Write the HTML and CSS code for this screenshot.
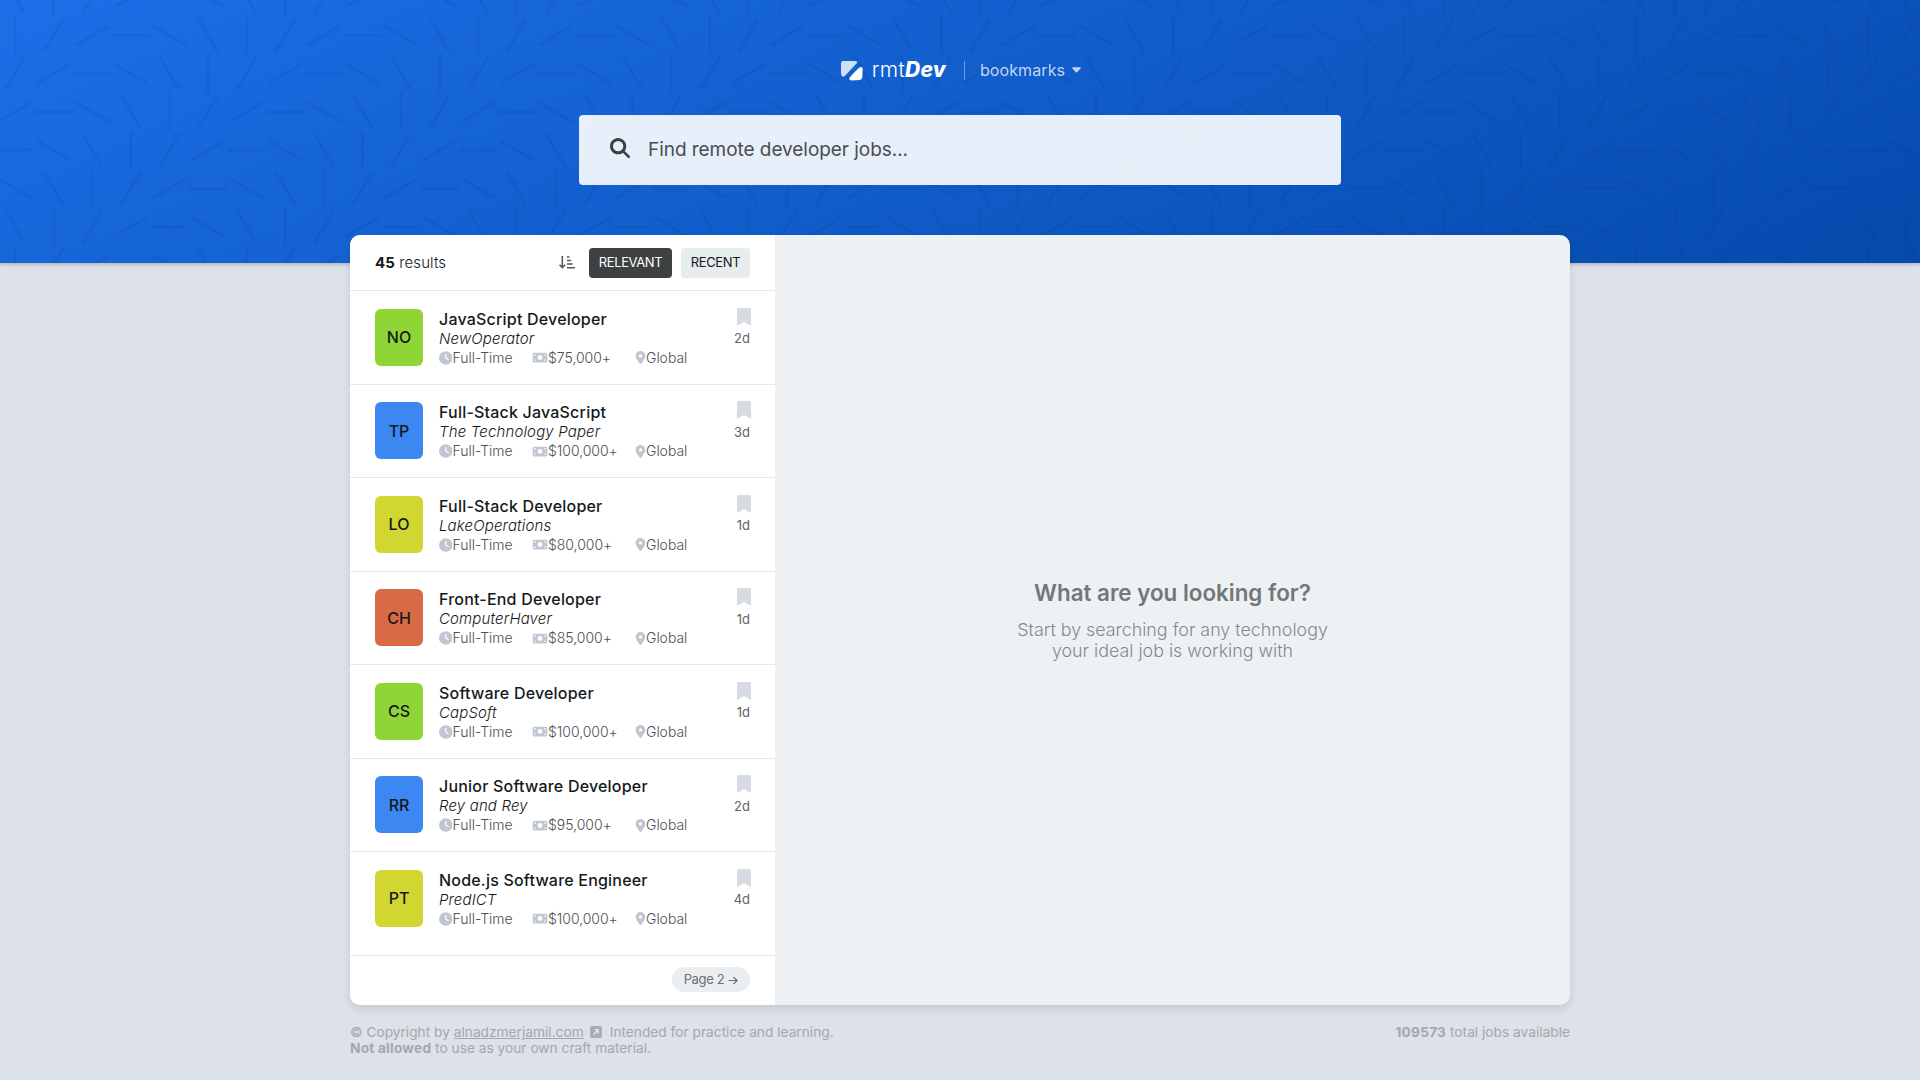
FILE: index.html
```html
<!DOCTYPE html>
<html lang="en">
<head>
<meta charset="utf-8">
<title>rmtDev</title>
<link rel="stylesheet" href="styles.css">
</head>
<body>
<svg class="defs" width="0" height="0" aria-hidden="true">
  <defs>
    <symbol id="clock" viewBox="0 0 512 512"><path fill-rule="evenodd" d="M256 0a256 256 0 1 1 0 512A256 256 0 1 1 256 0zM232 120v136c0 8 4 15.500 10.700 20l96 64c11 7.400 25.900 4.400 33.300-6.700s4.400-25.900-6.700-33.300L280 243.200V120c0-13.300-10.700-24-24-24s-24 10.700-24 24z"/></symbol>
    <symbol id="money" viewBox="0 0 576 512"><path fill-rule="evenodd" d="M64 64C28.700 64 0 92.700 0 128v256c0 35.300 28.700 64 64 64h448c35.300 0 64-28.700 64-64V128c0-35.300-28.700-64-64-64H64zM128 384H64v-64c35.300 0 64 28.700 64 64zM64 192v-64h64c0 35.300-28.700 64-64 64zM448 384c0-35.300 28.700-64 64-64v64h-64zM512 192c-35.300 0-64-28.700-64-64h64v64zM288 160a96 96 0 1 1 0 192 96 96 0 1 1 0-192z"/></symbol>
    <symbol id="pin" viewBox="0 0 384 512"><path fill-rule="evenodd" d="M215.700 499.200C267 435 384 279.400 384 192C384 86 298 0 192 0S0 86 0 192c0 87.400 117 243 168.300 307.200c12.300 15.300 35.100 15.300 47.400 0zM192 128a64 64 0 1 1 0 128 64 64 0 1 1 0-128z"/></symbol>
  </defs>
</svg>

<header class="hero">
  <svg class="hero__pattern" aria-hidden="true">
    <defs>
      <g id="sticks" stroke="#0a2f78" stroke-width="2.700">
        <path id="sweep" fill="none" d="M19.300 0v38.300M48.300 35.400l19.200-32.700M80 28.800l33-19.200M116 19.200h38.200M157.300 9.600l33 19.200M202.800 2.700l19.200 32.700"/>
        <use href="#sweep" x="231.600"/>
      </g>
      <pattern id="tile" x="-4.300" y="16.200" width="231.600" height="229.800" patternUnits="userSpaceOnUse">
        <use href="#sticks"/>
        <use href="#sticks" x="-38.600" y="38.300"/>
        <use href="#sticks" x="-77.200" y="76.600"/>
        <use href="#sticks" x="-115.800" y="114.900"/>
        <use href="#sticks" x="-154.400" y="153.200"/>
        <use href="#sticks" x="-193" y="191.500"/>
      </pattern>
    </defs>
    <rect width="100%" height="100%" fill="url(#tile)"/>
  </svg>
</header>

<div class="page">
  <div class="topbar">
    <a class="logo">
      <svg class="logo__mark" viewBox="0 0 22 20"><path fill="#fff" fill-opacity=".8" d="M2 0h12.500q2.500.200 1.200 2.300L4.300 14.600Q2.500 16.300 1 15.200 0 14 0 12V2Q0 0 2 0z"/><path fill="#fff" d="M18 6.700q3.500-2 3.700 1.500l-.5 8.300q-.3 2.200-2.500 2.500l-8.300.4q-3-.6-1.800-2.700 1.500-2 4.100-4.800z"/></svg>
      <span class="logo__text">rmt<b>Dev</b></span>
    </a>
    <button class="bookmarks">bookmarks<svg viewBox="0 0 10 6"><path d="M1 0h8q1 .2.500 1.200L5.700 5.400q-.7.600-1.400 0L.5 1.200Q0 .2 1 0z"/></svg></button>
  </div>

  <form class="search">
    <svg viewBox="0 0 512 512"><path d="M416 208c0 45.900-14.900 88.300-40 122.700L502.600 457.400c12.500 12.500 12.500 32.800 0 45.300s-32.800 12.500-45.300 0L330.700 376c-34.400 25.200-76.800 40-122.700 40C93.100 416 0 322.900 0 208S93.100 0 208 0S416 93.100 416 208zM208 340a132 132 0 1 0 0-264 132 132 0 1 0 0 264z"/></svg>
    <span>Find remote developer jobs...</span>
  </form>

  <main class="panel">
    <section class="sidebar">
      <div class="sidebar__top">
        <p class="count"><b>45</b> results</p>
        <svg class="sort" viewBox="0 0 16 13"><path fill="none" stroke="#55595b" stroke-width="1.500" d="M3.300 0v11.500M.5 8.700l2.800 2.900 2.800-2.900M8 1h2.500M8 4.500h4M8 8h5.700M8 11.700h8"/></svg>
        <button class="sort-btn sort-btn--active">RELEVANT</button>
        <button class="sort-btn">RECENT</button>
      </div>
      <ul class="jobs" id="jobs"></ul>
      <div class="pagination"><button class="next">Page 2<svg viewBox="0 0 10 9"><path fill="none" stroke="currentColor" stroke-width="1.200" d="M.5 4.500h8.500M5.500 1l3.600 3.500-3.600 3.500"/></svg></button></div>
    </section>
    <section class="empty">
      <h2>What are you looking for?</h2>
      <p>Start by searching for any technology<br>your ideal job is working with</p>
    </section>
  </main>

  <footer class="footer">
    <p>© Copyright by <a>alnadzmerjamil.com</a><svg viewBox="0 0 12 12"><path fill-rule="evenodd" d="M1.500 0h9A1.500 1.500 0 0 1 12 1.500v9a1.500 1.500 0 0 1-1.500 1.500h-9A1.500 1.500 0 0 1 0 10.500v-9A1.500 1.500 0 0 1 1.500 0zM4.500 3v1.300l1.900.1L3 7.900l1.100 1.100 3.400-3.500.1 2h1.400V3z"/></svg>Intended for practice and learning.<br><b>Not allowed</b> to use as your own craft material.</p>
    <p><b>109573</b> total jobs available</p>
  </footer>
</div>
<script src="jobs.js"></script>
</body>
</html>
```
FILE: styles.css
```css
* { box-sizing: border-box; margin: 0; padding: 0; }
body {
  height: 1080px;
  overflow: hidden;
  background: #dde1e9;
  color: #15191a;
  font-family: Inter, "Noto Sans", sans-serif;
  font-size: 16px;
}
button { border: 0; font: inherit; color: inherit; background: none; }
.defs { position: absolute; }

.hero {
  height: 263px;
  margin-bottom: -263px;
  background: linear-gradient(155deg, #1c6fe8, #054aac);
  box-shadow: 0 1px 4px rgba(0, 0, 0, .25);
}
.hero__pattern { display: block; width: 100%; height: 100%; opacity: .11; }

.page {
  position: relative;
  width: 1220px;
  margin: 0 auto;
  display: flex;
  flex-direction: column;
}
.topbar {
  height: 115px;
  padding: 25px 0 0 2px;
  display: flex;
  align-items: center;
  justify-content: center;
  color: #fff;
}
.logo { display: flex; align-items: center; gap: 9px; }
.logo__mark { width: 22px; height: 20px; margin-top: 1px; }
.logo__text { font-size: 21px; font-weight: 300; line-height: 20px; letter-spacing: .25px; }
.logo__text b { font-weight: 800; font-style: italic; }
.bookmarks {
  display: flex;
  align-items: center;
  gap: 7px;
  height: 19px;
  margin-left: 18px;
  padding-left: 15px;
  border-left: 1px solid rgba(255, 255, 255, .4);
  color: rgba(255, 255, 255, .75);
  letter-spacing: .1px;
}
.bookmarks svg { width: 9px; height: 6px; fill: currentColor; }

.search {
  width: 762px;
  height: 70px;
  margin: 0 auto 50px;
  padding-left: 31px;
  display: flex;
  align-items: center;
  gap: 18px;
  border-radius: 4px;
  background: rgba(255, 255, 255, .9);
  color: #4a4d50;
  font-size: 19px;
  letter-spacing: -.05px;
}
.search span { padding-bottom: 2px; }
.search svg { width: 20px; height: 20px; margin-top: -5px; fill: #3d4142; }

.panel {
  height: 770px;
  display: flex;
  border-radius: 10px;
  overflow: hidden;
  background: #edf1f4;
  box-shadow: 0 4px 10px rgba(0, 0, 0, .11);
}
.sidebar { width: 425px; display: flex; flex-direction: column; background: #fff; }
.sidebar__top {
  height: 56px;
  padding: 0 25px;
  display: flex;
  align-items: center;
  border-bottom: 1px solid #e6e9eb;
}
.count { margin-right: auto; font-size: 15px; font-weight: 300; letter-spacing: .1px; }
.count b { font-weight: 700; }
.sort { width: 16px; height: 13px; margin-right: 14px; }
.sort-btn {
  width: 69px;
  height: 30px;
  border-radius: 4px;
  background: #e7ecef;
  font-size: 13px;
  line-height: 29px;
  letter-spacing: -.4px;
}
.sort-btn--active { width: 83px; margin-right: 9px; background: #3d4142; color: #fff; }

.jobs { flex: 1; list-style: none; }
.job { height: 93.500px; padding: 17.700px 25px 0 25px; display: flex; border-bottom: 1px solid #e6e9eb; }
.job:last-child { border-bottom: 0; }
.badge {
  width: 48px;
  height: 57.300px;
  margin-right: 16px;
  display: grid;
  place-items: center;
  border-radius: 6px;
  font-weight: 500;
}
.badge--green { background: #8fd536; }
.badge--blue { background: #3c87f2; }
.badge--yellow { background: #d1d730; }
.badge--red { background: #d96a46; }
.job__body { flex: 1; }
.job__title { font-size: 16px; font-weight: 550; line-height: 20px; letter-spacing: .2px; }
.job__company { font-size: 15px; font-weight: 300; font-style: italic; line-height: 19px; letter-spacing: .15px; }
.job__tags { display: grid; grid-template-columns: 93px 103px auto; justify-content: start; line-height: 20.600px; font-size: 14px; color: #4a4f52; font-weight: 300; letter-spacing: -.03px; }
.job__tags span { display: flex; align-items: center; }
.job__tags svg { height: 13px; fill: #c0c6d2; }
.job__tags .i-clock { width: 13.500px; height: 14px; }
.i-money { width: 16px; }
.i-pin { width: 11px; }
.job__side { display: flex; flex-direction: column; align-items: flex-end; font-size: 13px; color: #5e6366; line-height: 18px; }
.job__side svg { width: 14px; height: 18px; margin: -1px -1px 3.500px 0; fill: #d7dbe2; }

.pagination { height: 50px; padding: 11px 25px 0; border-top: 1px solid #e6e9eb; }
.next {
  display: flex;
  align-items: center;
  justify-content: center;
  gap: 4px;
  width: 78px;
  height: 25px;
  margin-left: auto;
  padding-bottom: 1px;
  border-radius: 13px;
  background: #eaeef1;
  color: #6c7174;
  font-size: 13px;
  letter-spacing: -.35px;
}
.next svg { width: 10px; height: 9px; margin-top: 2px; }

.empty {
  flex: 1;
  display: flex;
  flex-direction: column;
  align-items: center;
  justify-content: center;
  text-align: center;
}
.empty h2 { margin-bottom: 12px; color: #727779; font-size: 22.400px; font-weight: 600; line-height: 28px; }
.empty p { color: #85898c; font-size: 17.850px; font-weight: 300; line-height: 21px; }

.footer {
  padding-top: 19px;
  display: flex;
  justify-content: space-between;
  color: #a3a8aa;
  font-size: 13.720px;
  line-height: 16px;
}
.footer a { text-decoration: underline; }
.footer b { letter-spacing: .2px; }
.footer svg { width: 12px; height: 12px; margin: 0 8px 0 6px; fill: #a9aeb1; vertical-align: -1px; }
```
FILE: jobs.js
```js
const jobs = [
  ["NO", "green", "JavaScript Developer", "NewOperator", "$75,000+", "2d"],
  ["TP", "blue", "Full-Stack JavaScript", "The Technology Paper", "$100,000+", "3d"],
  ["LO", "yellow", "Full-Stack Developer", "LakeOperations", "$80,000+", "1d"],
  ["CH", "red", "Front-End Developer", "ComputerHaver", "$85,000+", "1d"],
  ["CS", "green", "Software Developer", "CapSoft", "$100,000+", "1d"],
  ["RR", "blue", "Junior Software Developer", "Rey and Rey", "$95,000+", "2d"],
  ["PT", "yellow", "Node.js Software Engineer", "PredICT", "$100,000+", "4d"],
];

document.getElementById("jobs").innerHTML = jobs.map(([initials, color, title, company, pay, age]) => `
  <li class="job">
    <div class="badge badge--${color}">${initials}</div>
    <div class="job__body">
      <h3 class="job__title">${title}</h3>
      <p class="job__company">${company}</p>
      <p class="job__tags">
        <span><svg class="i-clock"><use href="#clock"/></svg>Full-Time</span>
        <span><svg class="i-money"><use href="#money"/></svg>${pay}</span>
        <span><svg class="i-pin"><use href="#pin"/></svg>Global</span>
      </p>
    </div>
    <div class="job__side"><svg viewBox="3 1.5 9 13.5" preserveAspectRatio="none"><path d="M3 2.500A1 1 0 0 1 4 1.500h7a1 1 0 0 1 1 1v12.500L7.500 12 3 15z"/></svg>${age}</div>
  </li>`).join("");
```
